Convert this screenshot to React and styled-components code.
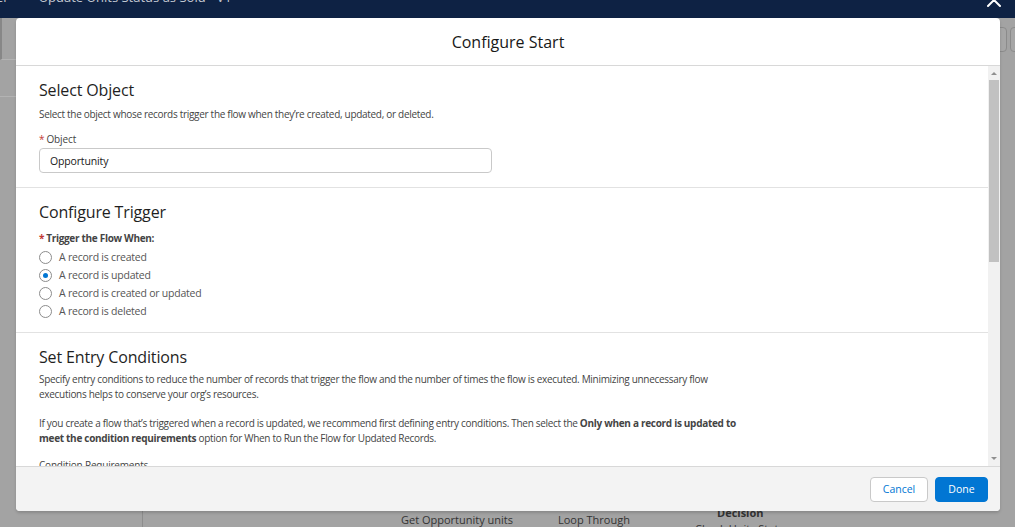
import React from "react"
import styled, { createGlobalStyle } from "styled-components"

const GlobalStyle = createGlobalStyle`
  *, *::before, *::after {
    box-sizing: border-box;
  }
  html, body {
    margin: 0;
    padding: 0;
  }
  body {
    background: #a3a3a3;
    font-family: "Open Sans", "Noto Sans", sans-serif;
  }
`

const Screen = styled.div`
  position: relative;
  width: 1015px;
  height: 527px;
  overflow: hidden;
  display: grid;
  grid-template-rows: 18px 1fr;
  background: #a3a3a3;
`

const AppBar = styled.header`
  display: flex;
  gap: 30px;
  background: #0e2244;
  color: #c3c8d1;
  font-size: 13px;
  line-height: 13px;
  overflow: hidden;
`

const AppBarText = styled.span`
  margin-top: -9px;
  margin-left: ${(p) => p.$offset || 0}px;
  white-space: nowrap;
`

const CloseButton = styled.button`
  position: absolute;
  top: -8px;
  right: 13px;
  width: 16px;
  height: 16px;
  padding: 0;
  border: none;
  background: none;
  display: flex;
`

const Workspace = styled.div`
  display: flex;
  min-height: 0;
`

const Sidebar = styled.aside`
  width: 143px;
  flex-shrink: 0;
  border-right: 1px solid #8d8d8d;
  display: flex;
  flex-direction: column;
`

const SidebarRow = styled.div`
  height: ${(p) => p.$h}px;
  border-bottom: 1px solid #b3b3b3;
  border-left: ${(p) => (p.$active ? "2px solid #878787" : "none")};
`

const Canvas = styled.div`
  position: relative;
  flex: 1;
`

const CanvasToolbar = styled.div`
  position: absolute;
  top: 9px;
  left: 832px;
  display: flex;
  gap: 3px;
`

const ToolButton = styled.div`
  width: 32px;
  height: 25px;
  border: 1px solid #8b8b8b;
  border-radius: 4px;
  background: #a6a6a6;
`

const NodeLabel = styled.div`
  position: absolute;
  left: ${(p) => p.$x}px;
  top: ${(p) => p.$y}px;
  font-size: 11px;
  line-height: 14px;
  font-weight: ${(p) => (p.$bold ? 700 : 400)};
  color: #333;
  white-space: nowrap;
`

const Modal = styled.div`
  position: absolute;
  top: 18px;
  left: 16px;
  width: 984px;
  height: 493px;
  background: #fff;
  border-radius: 4px;
  box-shadow: 0 2px 3px rgba(0, 0, 0, 0.16);
  display: flex;
  flex-direction: column;
  overflow: hidden;
`

const ModalHeader = styled.div`
  height: 48px;
  flex-shrink: 0;
  border-bottom: 1px solid #d8d8d8;
  display: flex;
  align-items: center;
  justify-content: center;
`

const ModalTitle = styled.h2`
  margin: 0;
  font-size: 16px;
  font-weight: 400;
  color: #181818;
`

const ModalBody = styled.div`
  flex: 1;
  min-height: 0;
  display: flex;
`

const Content = styled.div`
  flex: 1;
  overflow: hidden;
`

const Scrollbar = styled.div`
  width: 12px;
  flex-shrink: 0;
  background: #f1f1f1;
  display: flex;
  flex-direction: column;
`

const ScrollArrow = styled.div`
  height: ${(p) => p.$h}px;
  display: flex;
  align-items: center;
  justify-content: center;
  &::before {
    content: "";
    border-left: 3px solid transparent;
    border-right: 3px solid transparent;
    ${(p) => (p.$down ? "border-top" : "border-bottom")}: 3px solid #8f8f8f;
  }
`

const ScrollTrack = styled.div`
  flex: 1;
  padding: 0 1px;
`

const ScrollThumb = styled.div`
  height: 182px;
  background: #c1c1c1;
`

const Section = styled.section`
  padding: 12px 23px ${(p) => p.$pb || 14}px;
  border-bottom: 1px solid #e2e2e2;
`

const SectionTitle = styled.h3`
  margin: 0;
  font-size: 16px;
  line-height: 24px;
  letter-spacing: -0.15px;
  font-weight: 400;
  color: #1f1f1f;
`

const Help = styled.p`
  margin: ${(p) => p.$mt || 0}px 0 0;
  max-width: 705px;
  font-size: 10px;
  line-height: 15px;
  letter-spacing: -0.3px;
  color: #444;
`

const FieldLabel = styled.div`
  margin-top: ${(p) => p.$mt}px;
  font-size: 10px;
  line-height: 14px;
  letter-spacing: ${(p) => (p.$bold ? "-0.3px" : "-0.1px")};
  font-weight: ${(p) => (p.$bold ? 700 : 400)};
  color: #444;
`

const Required = styled.abbr`
  color: #c23934;
  text-decoration: none;
  margin-right: 2px;
`

const TextInput = styled.div`
  margin-top: 2px;
  width: 453px;
  height: 25px;
  border: 1px solid #c9c9c9;
  border-radius: 4px;
  padding: 0 10px;
  display: flex;
  align-items: center;
  font-size: 10.5px;
  letter-spacing: -0.15px;
  color: #181818;
`

const RadioList = styled.div`
  margin-top: 3px;
  display: flex;
  flex-direction: column;
`

const RadioRow = styled.label`
  height: 18px;
  display: flex;
  align-items: center;
  gap: 7px;
  font-size: 10.5px;
  letter-spacing: -0.22px;
  color: #555;
`

const RadioDot = styled.span`
  width: 13px;
  height: 13px;
  border: 1px solid #8c8c8c;
  border-radius: 50%;
  background: #fff;
  display: flex;
  align-items: center;
  justify-content: center;
  &::after {
    content: "";
    width: 5px;
    height: 5px;
    border-radius: 50%;
    background: ${(p) => (p.$checked ? "#0176d3" : "transparent")};
  }
`

const SubLabel = styled.div`
  margin-top: 12px;
  font-size: 10px;
  line-height: 14px;
  letter-spacing: -0.2px;
  color: #444;
`

const ModalFooter = styled.div`
  height: 45px;
  flex-shrink: 0;
  border-top: 1px solid #d8d8d8;
  background: #f3f3f3;
  display: flex;
  align-items: center;
  justify-content: flex-end;
  gap: 7px;
  padding: 0 12px;
`

const Button = styled.button`
  height: 25px;
  width: ${(p) => p.$w}px;
  padding: 0;
  border-radius: 4px;
  border: 1px solid ${(p) => (p.$brand ? "#0176d3" : "#c9c9c9")};
  background: ${(p) => (p.$brand ? "#0176d3" : "#fff")};
  color: ${(p) => (p.$brand ? "#fff" : "#0176d3")};
  font-family: inherit;
  font-size: 10.5px;
`

const triggers = [
  { label: "A record is created" },
  { label: "A record is updated", checked: true },
  { label: "A record is created or updated" },
  { label: "A record is deleted" },
]

export default function App() {
  return (
    <>
      <GlobalStyle />
      <Screen>
        <AppBar>
          <AppBarText $offset={-4}>er</AppBarText>
          <AppBarText>Update Units Status as Sold - V1</AppBarText>
        </AppBar>
        <Workspace>
          <Sidebar>
            <SidebarRow $h={42} $active />
            <SidebarRow $h={37} />
          </Sidebar>
          <Canvas>
            <CanvasToolbar>
              <ToolButton />
              <ToolButton />
            </CanvasToolbar>
            <NodeLabel $x={258} $y={495}>Get Opportunity units</NodeLabel>
            <NodeLabel $x={415} $y={495}>Loop Through</NodeLabel>
            <NodeLabel $x={574} $y={488} $bold>Decision</NodeLabel>
            <NodeLabel $x={552} $y={504}>Check Units Status</NodeLabel>
          </Canvas>
        </Workspace>

        <CloseButton aria-label="Close">
          <svg width="16" height="16" viewBox="0 0 16 16">
            <path d="M2 2 L14 14 M14 2 L2 14" stroke="#fff" strokeWidth="2" strokeLinecap="round" />
          </svg>
        </CloseButton>

        <Modal>
          <ModalHeader>
            <ModalTitle>Configure Start</ModalTitle>
          </ModalHeader>
          <ModalBody>
            <Content>
              <Section>
                <SectionTitle>Select Object</SectionTitle>
                <Help $mt={5}>
                  Select the object whose records trigger the flow when they’re created, updated, or deleted.
                </Help>
                <FieldLabel $mt={10}>
                  <Required>*</Required>Object
                </FieldLabel>
                <TextInput>Opportunity</TextInput>
              </Section>

              <Section $pb={12}>
                <SectionTitle>Configure Trigger</SectionTitle>
                <FieldLabel $mt={7} $bold>
                  <Required>*</Required>Trigger the Flow When:
                </FieldLabel>
                <RadioList>
                  {triggers.map((t) => (
                    <RadioRow key={t.label}>
                      <RadioDot $checked={t.checked} />
                      {t.label}
                    </RadioRow>
                  ))}
                </RadioList>
              </Section>

              <Section>
                <SectionTitle>Set Entry Conditions</SectionTitle>
                <Help $mt={3}>
                  Specify entry conditions to reduce the number of records that trigger the flow and the number of
                  times the flow is executed. Minimizing unnecessary flow executions helps to conserve your org’s
                  resources.
                </Help>
                <Help $mt={14}>
                  If you create a flow that’s triggered when a record is updated, we recommend first defining entry
                  conditions. Then select the <b>Only when a record is updated to meet the condition requirements</b>{" "}
                  option for When to Run the Flow for Updated Records.
                </Help>
                <SubLabel>Condition Requirements</SubLabel>
              </Section>
            </Content>
            <Scrollbar>
              <ScrollArrow $h={14} />
              <ScrollTrack>
                <ScrollThumb />
              </ScrollTrack>
              <ScrollArrow $h={16} $down />
            </Scrollbar>
          </ModalBody>
          <ModalFooter>
            <Button $w={58}>Cancel</Button>
            <Button $w={53} $brand>
              Done
            </Button>
          </ModalFooter>
        </Modal>
      </Screen>
    </>
  )
}
